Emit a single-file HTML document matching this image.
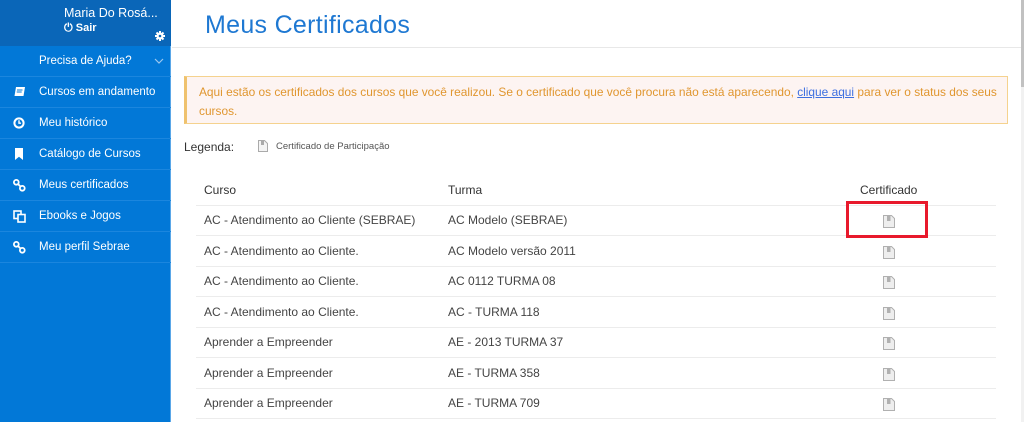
<!DOCTYPE html>
<html><head><meta charset="utf-8"><style>
*{margin:0;padding:0;box-sizing:border-box}
body{width:1024px;height:422px;overflow:hidden;background:#fff;font-family:"Liberation Sans",sans-serif;position:relative}
.sb{position:absolute;left:0;top:0;width:171px;height:422px;background:#0278d7;border-right:1px solid #5aa7e8}
.hd{position:absolute;left:0;top:0;width:171px;height:46px;background:#0a66b8}
.name{position:absolute;left:64px;top:6px;color:#fff;font-size:12.5px}
.sair{position:absolute;left:64px;top:22px;color:#fff;font-size:11px;font-weight:bold}
.gear{position:absolute;left:155px;top:31px}
.mi{position:absolute;left:0;width:171px;height:31px;border-bottom:1px solid #1b86de;color:#fff;font-size:11.5px;line-height:31px;padding-left:39px}
.mi svg{position:absolute;left:13px;top:9px}
.main{position:absolute;left:172px;top:0;right:3px;height:422px}
h1{position:absolute;left:33px;top:11px;font-weight:normal;color:#1e78d2;font-size:25px;letter-spacing:0.3px}
.line{position:absolute;left:0;right:0;top:47px;border-top:1px solid #e8e8e8}
.alert{position:absolute;left:12px;top:76px;width:824px;height:48px;background:#fdf4f2;border:1px solid #f5d28e;border-left:3px solid #efc26e;color:#e0962f;font-size:11.9px;line-height:19px;padding:6px 2px 0 12px;white-space:nowrap;overflow:hidden}
.alert a{color:#3d6fe0}
.leg{position:absolute;left:12px;top:140px;font-size:12px;color:#333}
.leg2{position:absolute;left:104px;top:141px;font-size:9.5px;color:#555}
.row{position:absolute;left:24px;width:800px;height:31px;border-bottom:1px solid #ececec;font-size:12px;color:#444;line-height:30px}
.c1{position:absolute;left:8px}.c2{position:absolute;left:252px}
.ic{position:absolute;left:687px;top:10px}
.red{position:absolute;left:846px;top:201px;width:82px;height:37px;border:3px solid #e8192c}
.scr{position:absolute;right:0;top:0;width:3px;height:422px;background:#f1f1f1}
.thumb{position:absolute;right:0;top:0;width:3px;height:87px;background:#c1c1c1}
</style></head><body>
<div class="sb">
 <div class="hd">
  <div class="name">Maria Do Rosá...</div>
  <div class="sair">&#x23FB; Sair</div>
  <svg class="gear" width="10" height="10" viewBox="0 0 10 10"><circle cx="5" cy="5" r="3.5" fill="#fff"/><g stroke="#fff" stroke-width="2"><line x1="5" y1="0" x2="5" y2="10"/><line x1="0" y1="5" x2="10" y2="5"/><line x1="1.5" y1="1.5" x2="8.5" y2="8.5"/><line x1="8.5" y1="1.5" x2="1.5" y2="8.5"/></g><circle cx="5" cy="5" r="1.3" fill="#0a66b8"/></svg>
 </div>
 <div class="mi" style="top:46px">Precisa de Ajuda?<svg style="left:154px;top:12px" width="10" height="6" viewBox="0 0 10 6"><path d="M1 1l4 4 4-4" stroke="#9cc8f0" fill="none" stroke-width="1.2"/></svg></div>
 <div class="mi" style="top:77px"><svg width="13" height="12" viewBox="0 0 13 12"><path d="M3 1h9l-1.5 9H1.5z" fill="#fff"/><path d="M4 4h5.5M3.7 6h5" stroke="#0278d7"/></svg>Cursos em andamento</div>
 <div class="mi" style="top:108px"><svg width="12" height="12" viewBox="0 0 12 12"><circle cx="6" cy="6" r="4.6" fill="none" stroke="#fff" stroke-width="2"/><path d="M6 3.2v3h2" stroke="#fff" fill="none" stroke-width="1.4"/></svg>Meu histórico</div>
 <div class="mi" style="top:139px"><svg width="12" height="12" viewBox="0 0 12 12"><path d="M2 0h8v12l-4-3.3L2 12z" fill="#fff"/></svg>Catálogo de Cursos</div>
 <div class="mi" style="top:170px"><svg width="13" height="13" viewBox="0 0 13 13"><circle cx="3.3" cy="3.3" r="2.4" fill="none" stroke="#fff" stroke-width="1.8"/><circle cx="9.3" cy="9.3" r="2.4" fill="none" stroke="#fff" stroke-width="1.8"/><path d="M5 5l2.6 2.6" stroke="#fff" stroke-width="1.8"/></svg>Meus certificados</div>
 <div class="mi" style="top:201px"><svg width="13" height="13" viewBox="0 0 13 13"><rect x="1" y="1" width="7" height="7.5" fill="none" stroke="#fff" stroke-width="1.6"/><rect x="5" y="4.5" width="7" height="7.5" fill="#0278d7" stroke="#fff" stroke-width="1.6"/></svg>Ebooks e Jogos</div>
 <div class="mi" style="top:232px"><svg width="13" height="13" viewBox="0 0 13 13"><circle cx="3.3" cy="3.3" r="2.4" fill="none" stroke="#fff" stroke-width="1.8"/><circle cx="9.3" cy="9.3" r="2.4" fill="none" stroke="#fff" stroke-width="1.8"/><path d="M5 5l2.6 2.6" stroke="#fff" stroke-width="1.8"/></svg>Meu perfil Sebrae</div>
</div>
<div class="main">
 <h1>Meus Certificados</h1>
 <div class="line"></div>
 <div class="alert">Aqui estão os certificados dos cursos que você realizou. Se o certificado que você procura não está aparecendo, <a href="#">clique aqui</a> para ver o status dos seus<br>cursos.</div>
 <div class="leg">Legenda:</div>
 <svg style="position:absolute;left:86px;top:140px" width="10" height="12" viewBox="0 0 10 12"><path d="M0.5 0.5h6l3 3v8h-9z" fill="#f4f4f4" stroke="#aaa"/><rect x="3" y="1" width="3" height="4" fill="#aaa"/></svg>
 <div class="leg2">Certificado de Participação</div>
 <div class="row" style="top:175px;font-size:12px;color:#333"><span class="c1">Curso</span><span class="c2">Turma</span><span style="position:absolute;left:664px">Certificado</span></div>
</div>
<div id="rows"></div>
<div class="red"></div>
<div class="scr"></div><div class="thumb"></div>
<script>
var d=[["AC - Atendimento ao Cliente (SEBRAE)","AC Modelo (SEBRAE)"],["AC - Atendimento ao Cliente.","AC Modelo versão 2011"],["AC - Atendimento ao Cliente.","AC 0112 TURMA 08"],["AC - Atendimento ao Cliente.","AC - TURMA 118"],["Aprender a Empreender","AE - 2013 TURMA 37"],["Aprender a Empreender","AE - TURMA 358"],["Aprender a Empreender","AE - TURMA 709"]];
var h="";for(var i=0;i<d.length;i++){h+='<div class="row" style="left:196px;top:'+(205+i*30.5)+'px"><span class="c1">'+d[i][0]+'</span><span class="c2">'+d[i][1]+'</span><svg class="ic" width="12" height="13" viewBox="0 0 12 13"><path d="M0.5 0.5h8l3 3v9h-11z" fill="#eee" stroke="#b0b0b0"/><rect x="4" y="1" width="3.5" height="5" fill="#b0b0b0"/></svg></div>';}
document.getElementById("rows").innerHTML=h;
</script>
</body></html>
